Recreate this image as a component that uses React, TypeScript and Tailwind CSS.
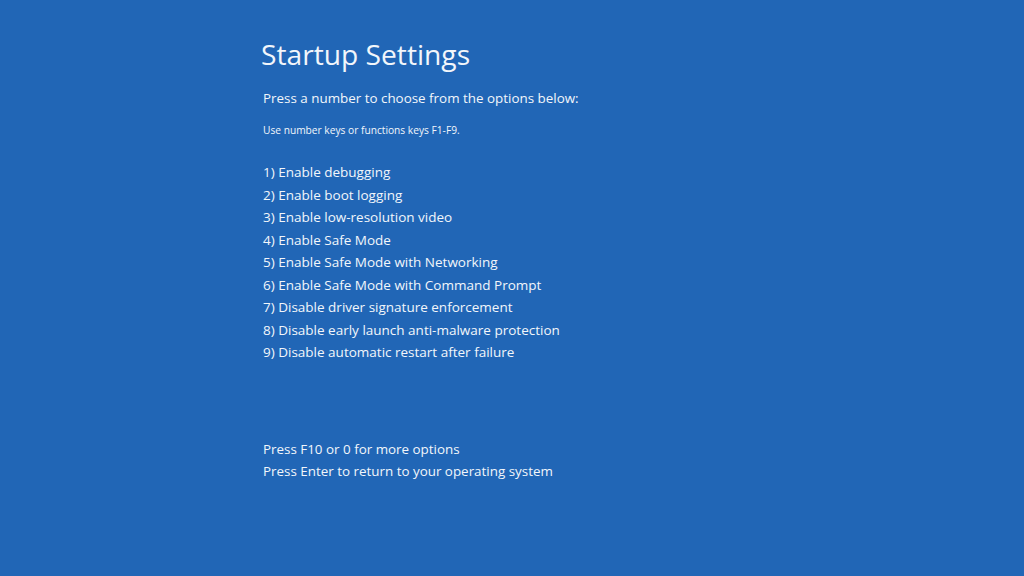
export default function App() {
  const items = [
    "1) Enable debugging",
    "2) Enable boot logging",
    "3) Enable low-resolution video",
    "4) Enable Safe Mode",
    "5) Enable Safe Mode with Networking",
    "6) Enable Safe Mode with Command Prompt",
    "7) Disable driver signature enforcement",
    "8) Disable early launch anti-malware protection",
    "9) Disable automatic restart after failure",
  ];
  return (
    <div
      className="w-[1024px] h-[576px] bg-[#2166b6] text-[#f2f6fb] overflow-hidden"
      style={{ fontFamily: '"Open Sans", "Noto Sans", sans-serif' }}
    >
      <div className="pl-[261px] pt-[34px] flex flex-col">
        <h1 className="text-[28.2px] leading-[40px] font-normal">Startup Settings</h1>
        <p className="pl-[2px] mt-[13px] text-[13.4px] leading-[22px]">Press a number to choose from the options below:</p>
        <p className="pl-[2px] mt-[14px] text-[10.2px] leading-[14px]">Use number keys or functions keys F1-F9.</p>
        <ul className="pl-[2px] mt-[24px] flex flex-col text-[13.5px] leading-[22.5px]">
          {items.map((t) => (
            <li key={t}>{t}</li>
          ))}
        </ul>
        <div className="pl-[2px] mt-[74px] flex flex-col text-[13.4px] leading-[22.5px]">
          <p>Press F10 or 0 for more options</p>
          <p>Press Enter to return to your operating system</p>
        </div>
      </div>
    </div>
  );
}
